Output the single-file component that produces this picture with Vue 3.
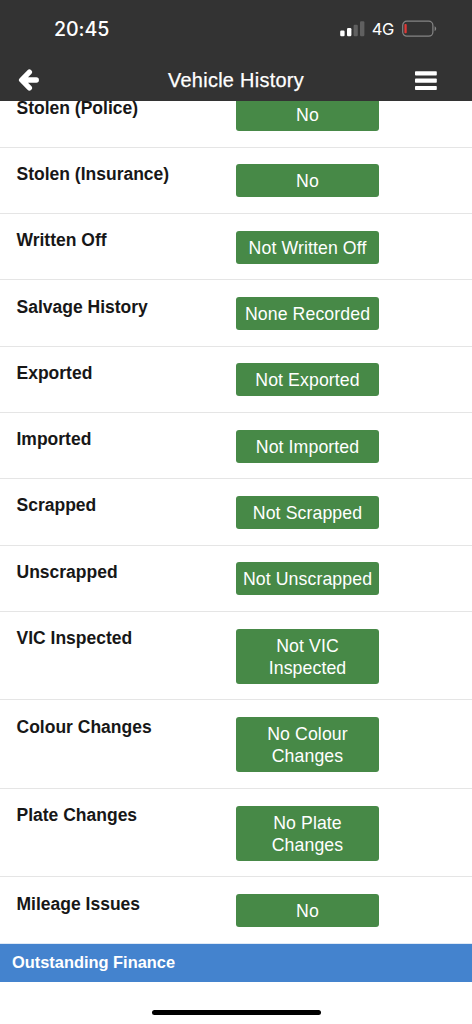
<script setup>
const rows = [
  { label: 'Stolen (Police)', value: 'No' },
  { label: 'Stolen (Insurance)', value: 'No' },
  { label: 'Written Off', value: 'Not Written Off' },
  { label: 'Salvage History', value: 'None Recorded' },
  { label: 'Exported', value: 'Not Exported' },
  { label: 'Imported', value: 'Not Imported' },
  { label: 'Scrapped', value: 'Not Scrapped' },
  { label: 'Unscrapped', value: 'Not Unscrapped' },
  { label: 'VIC Inspected', value: 'Not VIC Inspected' },
  { label: 'Colour Changes', value: 'No Colour Changes' },
  { label: 'Plate Changes', value: 'No Plate Changes' },
  { label: 'Mileage Issues', value: 'No' },
]
</script>

<template>
  <div class="screen">
    <header class="top">
      <div class="status">
        <span class="time">20:45</span>
        <div class="indicators">
          <svg class="signal" width="26" height="16" viewBox="0 0 26 16">
            <rect x="0.2" y="9.6" width="4.4" height="5.6" rx="1.2" fill="#fff" />
            <rect x="7" y="7" width="4.4" height="8.2" rx="1.2" fill="#fff" />
            <rect x="13.6" y="3.8" width="4.2" height="11.4" rx="1.2" fill="#606060" />
            <rect x="20" y="0.2" width="4.4" height="15" rx="1.2" fill="#606060" />
          </svg>
          <span class="network">4G</span>
          <svg class="battery" width="36" height="18" viewBox="0 0 36 18">
            <rect x="0.7" y="1.2" width="30.2" height="15" rx="4.2" fill="none" stroke="#858585" stroke-width="1.2" />
            <rect x="2.4" y="3.9" width="2.3" height="9.4" rx="0.8" fill="#e03836" />
            <path d="M32.6 6.3c2.1.8 2.1 4 0 4.8z" fill="#858585" />
          </svg>
        </div>
      </div>
      <nav class="bar">
        <svg class="back" width="22" height="24" viewBox="0 0 22 24">
          <path d="M11.4 4.1 3.6 12l7.8 7.9M4 12h14.3" fill="none" stroke="#fff" stroke-width="5.3" stroke-linecap="round" stroke-linejoin="round" />
        </svg>
        <h1 class="title">Vehicle History</h1>
        <svg class="menu" width="22" height="20" viewBox="0 0 22 20">
          <rect x="0" y="0.3" width="21.8" height="4.2" rx="0.8" fill="#fff" />
          <rect x="0" y="7.6" width="21.8" height="4.2" rx="0.8" fill="#fff" />
          <rect x="0" y="14.9" width="21.8" height="4.2" rx="0.8" fill="#fff" />
        </svg>
      </nav>
    </header>

    <main class="content">
      <div v-for="row in rows" :key="row.label" class="row">
        <div class="label">{{ row.label }}</div>
        <div class="badge">{{ row.value }}</div>
      </div>
      <h2 class="section">Outstanding Finance</h2>
    </main>

    <div class="home"><span class="home-bar"></span></div>
  </div>
</template>

<style>
html,
body {
  background: #fff;
}
</style>

<style scoped>
.screen {
  display: flex;
  flex-direction: column;
  height: 1024px;
  overflow: hidden;
  background: #fff;
  color: #171717;
  font-family: "Liberation Sans", Arial, sans-serif;
}
.top {
  position: relative;
  z-index: 1;
  flex: none;
  height: 101px;
  background: #333;
  color: #fff;
}
.status {
  display: flex;
  justify-content: space-between;
  align-items: center;
  height: 57px;
  padding: 0 34px 0 54px;
}
.time {
  font-family: Inter, sans-serif;
  font-size: 19.6px;
  font-weight: 500;
  line-height: 24px;
  letter-spacing: -0.05px;
}
.indicators {
  display: flex;
  align-items: center;
}
.network {
  margin: 1px 8px 0 6px;
  font-family: Inter, sans-serif;
  font-size: 16.5px;
  font-weight: 400;
  line-height: 20px;
  letter-spacing: -0.4px;
}
.bar {
  display: grid;
  grid-template-columns: 40px 1fr 40px;
  align-items: center;
  height: 44px;
  padding: 0 35px 0 18px;
}
.back {
  margin-top: 2px;
}
.menu {
  justify-self: end;
  margin-top: 3px;
}
.title {
  margin: 1px 0 0 17px;
  font-size: 19.9px;
  font-weight: 400;
  line-height: 24px;
  letter-spacing: 0.3px;
  text-align: center;
  -webkit-text-stroke: 0.25px #fff;
}
.content {
  flex: none;
  margin-top: -19.7px;
}
.row {
  display: grid;
  grid-template-columns: 219.5px 143px;
  align-items: start;
  padding: 16.6px 16.5px 15.6px;
  border-bottom: 1px solid #e5e5e5;
}
.row:last-of-type {
  border-bottom-color: #dfe9f5;
}
.label {
  margin-top: -1.4px;
  font-size: 17.5px;
  font-weight: 700;
  line-height: 22.15px;
}
.badge {
  padding: 6.2px 5px 4.8px;
  border-radius: 3px;
  background: #478947;
  color: #fff;
  font-size: 17.7px;
  line-height: 22.15px;
  letter-spacing: 0.1px;
  text-align: center;
}
.section {
  margin: 0;
  padding: 7.6px 12px 8.4px;
  background: #4483ce;
  color: #fff;
  font-size: 16.4px;
  font-weight: 700;
  line-height: 22px;
}
.home {
  display: flex;
  flex: 1;
  justify-content: center;
  align-items: flex-end;
  padding-bottom: 9px;
}
.home-bar {
  width: 169px;
  height: 5.5px;
  border-radius: 3px;
  background: #000;
}
</style>
